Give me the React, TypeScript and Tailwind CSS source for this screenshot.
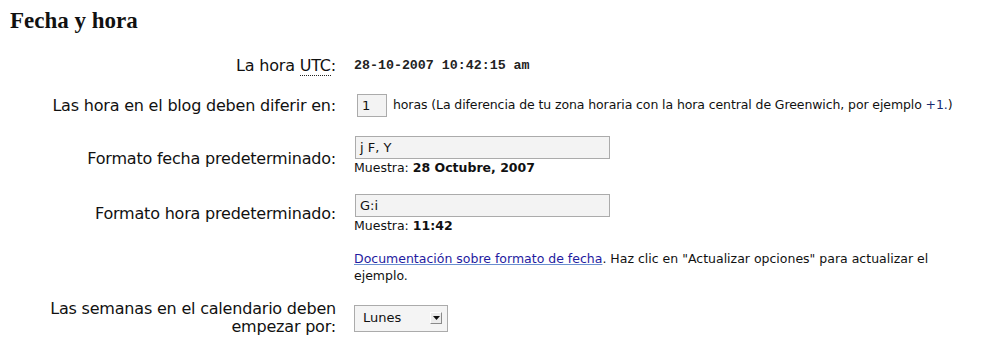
const sans = 'font-["DejaVu_Sans","Lucida_Grande",sans-serif]';

function Label({ children, className = '' }: { children: React.ReactNode; className?: string }) {
  return (
    <div className={`text-right text-[16px] leading-[18px] text-[#111] tracking-[-0.2px] ${className}`}>
      {children}
    </div>
  );
}

function TextBox({ value, width }: { value: string; width: string }) {
  return (
    <div
      className={`${width} h-[23px] border border-[#ababab] bg-[#f3f3f3] px-[4px] text-[13px] leading-[21px] text-[#111]`}
    >
      {value}
    </div>
  );
}

export default function App() {
  return (
    <div className={`w-[986px] h-[362px] bg-white ${sans} overflow-hidden`}>
      <h2 className='pl-[10px] pt-[8px] font-["Liberation_Serif",Georgia,serif] text-[23px] font-bold leading-[26px] text-[#111]'>
        Fecha y hora
      </h2>

      <div className="grid grid-cols-[336px_1fr] gap-x-[18px] items-center pt-[23px]">
        <Label>
          La hora{' '}
          <abbr className="no-underline border-b border-dotted border-[#222]">UTC</abbr>:
        </Label>
        <div className='font-["Liberation_Mono",monospace] text-[13.3px] leading-[18px] font-semibold text-[#222]'>
          28-10-2007 10:42:15 am
        </div>

        <div className="col-span-2 h-[19px]" />

        <Label>Las hora en el blog deben diferir en:</Label>
        <div className="flex items-center gap-[6px] text-[12.5px] text-[#111]">
          <div className="ml-[3px]">
            <TextBox value="1" width="w-[30px]" />
          </div>
          <span className="tracking-[-0.1px]">
            horas (La diferencia de tu zona horaria con la hora central de Greenwich, por ejemplo{' '}
            <span className="text-[#1a2a6e]">+1.</span>)
          </span>
        </div>

        <div className="col-span-2 h-[19px]" />

        <Label className="pt-[5px]">Formato fecha predeterminado:</Label>
        <div className="text-[12.5px] leading-[17px] text-[#111]">
          <div className="ml-[1px]">
            <TextBox value="j F, Y" width="w-[255px]" />
          </div>
          <div>
            Muestra: <strong>28 Octubre, 2007</strong>
          </div>
        </div>

        <div className="col-span-2 h-[18px]" />

        <Label>Formato hora predeterminado:</Label>
        <div className="text-[12.5px] leading-[17px] text-[#111]">
          <div className="ml-[1px]">
            <TextBox value="G:i" width="w-[255px]" />
          </div>
          <div>
            Muestra: <strong>11:42</strong>
          </div>
        </div>

        <div className="col-span-2 h-[16px]" />

        <div />
        <div className="pr-[50px] text-[12.5px] leading-[17px] text-[#111]">
          <a href="#" className="text-[#1f1ba0] underline decoration-[#6a8fd0] underline-offset-[1px]">
            Documentación sobre formato de fecha
          </a>
          . Haz clic en "Actualizar opciones" para actualizar el ejemplo.
        </div>

        <div className="col-span-2 h-[16px]" />

        <Label>
          Las semanas en el calendario deben
          <br />
          empezar por:
        </Label>
        <div>
          <div className="w-[94px] h-[27px] border border-[#ababab] bg-[#f4f4f4] flex items-center justify-between pl-[8px] pr-[5px] text-[13px] text-[#111]">
            <span>Lunes</span>
            <span className="w-[12px] h-[12px] border border-[#8a8a8a] border-t-white border-l-white bg-[#ececec] flex items-center justify-center">
              <svg width="7" height="4" viewBox="0 0 7 4">
                <path d="M0 0h7L3.5 4z" fill="#111" />
              </svg>
            </span>
          </div>
        </div>
      </div>
    </div>
  );
}
